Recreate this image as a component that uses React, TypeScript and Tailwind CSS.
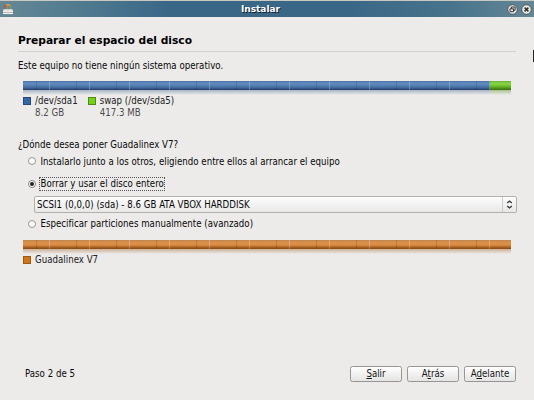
import type { ReactNode } from "react";

function Bar({ kind }: { kind: "used" | "new" }) {
  const blue =
    "bg-[linear-gradient(to_bottom,#466a9b_0,#5a84b9_1px,#5f8abd_3px,#527bb0_5px,#3f6496_7px,#213b63_9px)]";
  const green =
    "bg-[linear-gradient(to_bottom,#69ac36_0,#87d548_2px,#7ccc3b_4px,#62ad24_6px,#356d0b_9px)]";
  const orange =
    "bg-[linear-gradient(to_bottom,#b58759_0,#d28a48_1px,#dc924a_4px,#cc7e35_6px,#a96224_7px,#874915_9px)]";
  const ticks =
    "bg-[repeating-linear-gradient(to_right,transparent_0,transparent_13px,rgba(0,0,0,.13)_13px,rgba(0,0,0,.13)_14px,transparent_14px,transparent_26px,rgba(255,255,255,.22)_26px,rgba(255,255,255,.22)_27px,transparent_27px,transparent_39px,rgba(0,0,0,.13)_39px,rgba(255,255,255,.14)_40px)]";
  return (
    <div className="relative ml-[23px] h-[15px] w-[488px]">
      {kind === "used" ? (
        <>
          <div className="flex h-[9px]">
            <div className={`w-[467px] ${blue}`} />
            <div className={`flex-1 ${green}`} />
          </div>
          <div className="flex h-[5px]">
            <div className="w-[467px] bg-linear-to-b from-[#a9b3c3] to-[#ecebea]" />
            <div className="flex-1 bg-linear-to-b from-[#a9c292] to-[#ecebea]" />
          </div>
        </>
      ) : (
        <>
          <div className={`h-[9px] ${orange}`} />
          <div className="h-[5px] bg-linear-to-b from-[#cdb096] to-[#ecebea]" />
        </>
      )}
      <div className={`absolute inset-x-0 top-0 h-[9px] ${ticks}`} />
    </div>
  );
}

function Radio({ checked = false, children }: { checked?: boolean; children: ReactNode }) {
  return (
    <div className="ml-7 flex h-[14px] items-center">
      <svg className="mr-[3px] h-2 w-2 shrink-0" viewBox="0 0 8 8">
        <circle cx="4" cy="4" r="3.5" fill="#fcfcfc" stroke={checked ? "#777" : "#8c8c8c"} strokeWidth=".9" />
        {checked && <circle cx="4" cy="4" r="2" fill="#222" />}
      </svg>
      {children}
    </div>
  );
}

function Button({ children, width }: { children: ReactNode; width: string }) {
  return (
    <button
      className={`${width} flex h-4 items-center justify-center rounded-[2.5px] border border-[#969694] bg-linear-to-b from-[#fefefe] to-[#e4e4e3] text-[#151515]`}
    >
      <span>{children}</span>
    </button>
  );
}

export default function App() {
  return (
    <div className="flex h-[400px] w-[534px] flex-col overflow-hidden bg-[#ecebea] font-['DejaVu_Sans_Condensed','DejaVu_Sans',sans-serif] text-[9.6px] leading-[12px] tracking-[0.02px] whitespace-nowrap text-[#080808] [font-stretch:condensed]">
      <header className="flex h-[17px] shrink-0 items-center border-t border-[#c9c9c1] bg-[linear-gradient(to_right,#648796_0,#557e91_60px,#3b6787_170px,#3b6787_350px,#48738b_450px,#648796_534px)]">
        <div className="flex w-[60px] pl-[2px]">
          <svg width="12" height="12" viewBox="0 0 12 12">
            <path d="M2.4 5.5C2 3.5 3.5 2 5 2" fill="none" stroke="#c0503a" strokeWidth="1.5" />
            <path d="M4 2.2C6 1.2 7.5 1.8 8 3" fill="none" stroke="#d3a640" strokeWidth="1.5" />
            <path d="M7.5 2.5Q9 3.5 9 5.5" fill="none" stroke="#7ba552" strokeWidth="1.3" />
            <path d="M4.5 5 6.2 4" stroke="#b9843c" strokeWidth="1.5" />
            <path d="M1.8 6h8.4l.8 2H1Z" fill="#d4d2cb" />
            <path d="M1 7.5h10v3.6H1Z" fill="#f0f0ee" />
            <path d="M1 9.5h10" stroke="#a9aaa8" strokeWidth=".8" />
          </svg>
        </div>
        <h1 className="flex-1 text-center font-['DejaVu_Sans',sans-serif] text-[9px] font-bold tracking-normal text-white [font-stretch:normal] [text-shadow:1px_1px_0_#142330]">
          Instalar
        </h1>
        <div className="flex w-[73px] justify-end gap-[3px] pr-[2px]">
          <svg width="11" height="11" viewBox="0 0 11 11">
            <circle cx="5.5" cy="5.5" r="4.8" fill="#e7e7e4" stroke="#4a565d" />
            <path d="M4.3 4.5V3h3.8v3.3H6.7M3 4.8h3.5v2.9H3Z" fill="none" stroke="#333" />
          </svg>
          <svg width="11" height="11" viewBox="0 0 11 11">
            <circle cx="5.5" cy="5.5" r="4.8" fill="#e7e7e4" stroke="#4a565d" />
            <path d="m3.6 3.6 3.8 3.8m0-3.8L3.6 7.4" stroke="#333" strokeWidth="1.5" />
          </svg>
        </div>
      </header>

      <main className="relative flex flex-1 flex-col">
        <div className="absolute top-[33px] right-0 h-3 w-px bg-[#222]" />
        <h2 className="mt-[17px] ml-[18px] h-[18px] w-[498px] border-b border-[#d2d1d0] font-['DejaVu_Sans',sans-serif] text-[10.67px] leading-[14px] font-bold tracking-normal text-black [font-stretch:normal]">
          Preparar el espacio del disco
        </h2>
        <p className="mt-2 ml-[18px] h-[21px]">Este equipo no tiene ningún sistema operativo.</p>
        <Bar kind="used" />
        <div className="-mt-[1px] ml-[23px] flex h-11 gap-[10px]">
          <div className="flex">
            <i className="mt-[2px] mr-1 h-2 w-2 border border-[#29477a] bg-[#3465a4]" />
            <div>
              <p className="text-[#222]">/dev/sda1</p>
              <p className="text-[#4c4c4c]">8.2 GB</p>
            </div>
          </div>
          <div className="flex">
            <i className="mt-[2px] mr-1 h-2 w-2 border border-[#4d8b14] bg-[#73d216]" />
            <div>
              <p className="text-[#222]">swap (/dev/sda5)</p>
              <p className="text-[#4c4c4c]">417.3 MB</p>
            </div>
          </div>
        </div>
        <p className="ml-[18px] h-[15px]">¿Dónde desea poner Guadalinex V7?</p>
        <Radio>
          <span className="ml-[1.5px] pt-[2px]">Instalarlo junto a los otros, eligiendo entre ellos al arrancar el equipo</span>
        </Radio>
        <div className="h-[9px]" />
        <Radio checked>
          <span className="flex h-[14px] items-center border border-dotted border-[#555] px-[0.5px]">Borrar y usar el disco entero</span>
        </Radio>
        <div className="mt-[5px] ml-[34px] flex h-[17px] w-[483px] items-center rounded-[2px] border border-[#b1b0af] bg-linear-to-b from-[#fdfdfd] to-[#e7e7e6] pl-[2px]">
          <span className="flex-1">SCSI1 (0,0,0) (sda) - 8.6 GB ATA VBOX HARDDISK</span>
          <span className="flex h-[15px] w-[14px] items-center justify-center border-l border-[#cccbca]">
            <svg width="7" height="9" viewBox="0 0 7 9" fill="none" stroke="#333" strokeWidth="1.3">
              <path d="m1.2 3 2.3-2 2.3 2M1.2 6l2.3 2 2.3-2" />
            </svg>
          </span>
        </div>
        <div className="h-1" />
        <Radio>
          <span className="ml-[1.5px]">Especificar particiones manualmente (avanzado)</span>
        </Radio>
        <div className="h-[9px]" />
        <Bar kind="new" />
        <div className="-mt-[1px] ml-[23px] flex text-[#222]">
          <i className="mt-[2px] mr-1 h-2 w-2 border border-[#9d5914] bg-[#ce7615]" />
          Guadalinex V7
        </div>
        <footer className="mt-auto mb-[18px] flex h-4 items-center gap-[5px] pr-[18px] pl-[25px]">
          <span className="flex-1">Paso 2 de 5</span>
          <Button width="w-[52px]"><u>S</u>alir</Button>
          <Button width="w-[52px]">A<u>t</u>rás</Button>
          <Button width="w-[52px]">A<u>d</u>elante</Button>
        </footer>
      </main>
    </div>
  );
}
